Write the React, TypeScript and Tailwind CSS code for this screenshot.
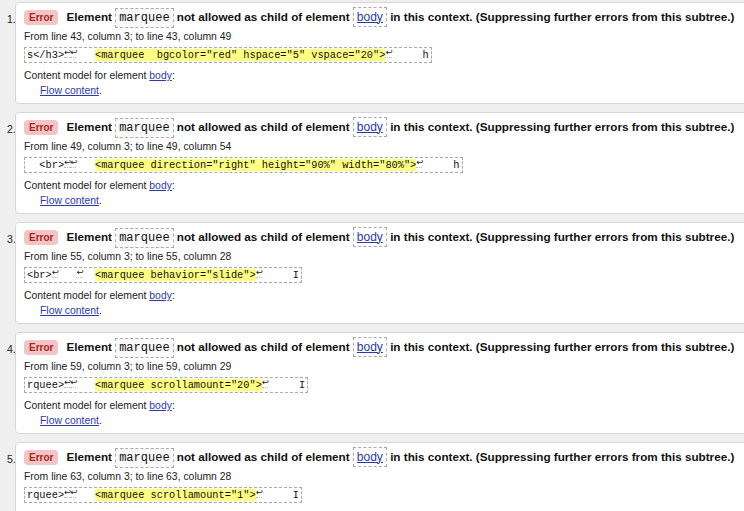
import React from "react";

type Item = {
    n: number;
    from: string;
    pre: string;
    hl: string;
    post: string;
};

// "^" marks a line-break glyph in the excerpt
const items: Item[] = [
    {
        n: 1,
        from: "From line 43, column 3; to line 43, column 49",
        pre: "s</h3>^^   ",
        hl: '<marquee  bgcolor="red" hspace="5" vspace="20">',
        post: "^     h",
    },
    {
        n: 2,
        from: "From line 49, column 3; to line 49, column 54",
        pre: "  <br>^^   ",
        hl: '<marquee direction="right" height="90%" width="80%">',
        post: "^     h",
    },
    {
        n: 3,
        from: "From line 55, column 3; to line 55, column 28",
        pre: "<br>^   ^  ",
        hl: '<marquee behavior="slide">',
        post: "^     I",
    },
    {
        n: 4,
        from: "From line 59, column 3; to line 59, column 29",
        pre: "rquee>^^   ",
        hl: '<marquee scrollamount="20">',
        post: "^     I",
    },
    {
        n: 5,
        from: "From line 63, column 3; to line 63, column 28",
        pre: "rquee>^^   ",
        hl: '<marquee scrollamount="1">',
        post: "^     I",
    },
];

const sans = "font-['Liberation_Sans',Arial,sans-serif]";
const mono = "font-['Liberation_Mono','DejaVu_Sans_Mono',monospace]";

function Code({ text }: { text: string }) {
    const parts = text.split("^");
    return (
        <>
            {parts.map((p, i) => (
                <React.Fragment key={i}>
                    {p}
                    {i < parts.length - 1 && (
                        <span className="inline-block w-[6.18px] text-[8.5px] leading-none align-[3px] text-[#222] font-['DejaVu_Sans',sans-serif] border-b border-dotted border-[#bbb]">
                            ↩
                        </span>
                    )}
                </React.Fragment>
            ))}
        </>
    );
}

function ErrorCard({ item }: { item: Item }) {
    return (
        <div className="flex h-[102px] shrink-0">
            <div className="w-[15px] shrink-0 pl-[7px] pt-[8px] text-[10.5px] leading-[18px] text-[#222] whitespace-nowrap">
                {item.n}.
            </div>
            <div className="w-[760px] shrink-0 bg-white border border-[#d8d8d8] rounded-[4px] pl-[8px] pt-[4px]">
                {/* Title */}
                <div className="flex items-center whitespace-nowrap h-[20px]">
                    <span className="bg-[#f4c4c4] text-[#a3261d] font-bold text-[10px] leading-[15px] px-[5px] rounded-[4px] mr-[8px]">
                        Error
                    </span>
                    <span className="font-bold text-[11.7px] text-[#111]">
                        Element{" "}
                        <span className={`${mono} font-normal text-[12px] border border-dashed border-[#aaa] bg-[#fafafa] px-[3px] py-[2px]`}>
                            marquee
                        </span>{" "}
                        not allowed as child of element{" "}
                        <span className="font-normal text-[12px] border border-dashed border-[#aaa] px-[3px] py-[2px]">
                            <span className="text-[#2c3aa8] underline">body</span>
                        </span>{" "}
                        in this context. (Suppressing further errors from this subtree.)
                    </span>
                </div>
                <p className="text-[10.4px] leading-[14px] mt-[3px] text-[#222]">{item.from}</p>
                <div
                    className={`${mono} block w-fit mt-[3px] text-[10.3px] leading-[14px] whitespace-pre border border-dashed border-[#aaa] px-[2px] text-[#111]`}
                >
                    <Code text={item.pre} />
                    <span className="bg-[#ffff80]">{item.hl}</span>
                    <Code text={item.post} />
                </div>
                <p className="text-[10.4px] leading-[14px] mt-[6px] text-[#222]">
                    Content model for element <span className="text-[#2c3aa8] underline">body</span>:
                </p>
                <p className="text-[10.4px] leading-[14px] mt-[1px] pl-[16px] text-[#222]">
                    <span className="text-[#2c3aa8] underline">Flow content</span>.
                </p>
            </div>
        </div>
    );
}

export default function App() {
    return (
        <main className={`${sans} w-[744px] h-[511px] overflow-hidden bg-[#efefef] pt-[2px] flex flex-col gap-[8px]`}>
            {items.map((it) => (
                <ErrorCard key={it.n} item={it} />
            ))}
        </main>
    );
}
